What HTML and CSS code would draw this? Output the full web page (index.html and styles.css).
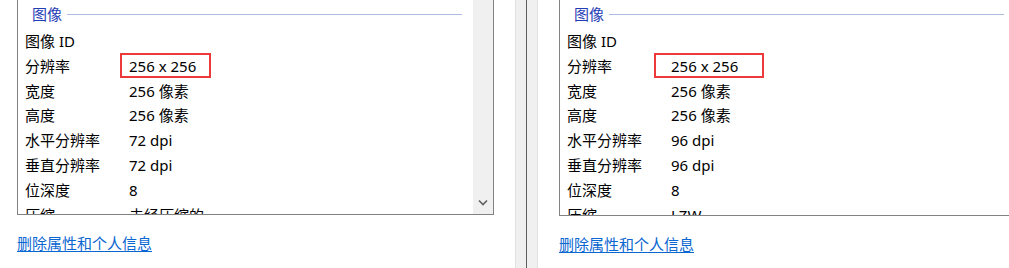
FILE: index.html
```html
<!DOCTYPE html>
<html lang="zh-CN">
<head>
    <meta charset="UTF-8">
    <title>图像属性对比</title>
    <link rel="stylesheet" href="styles.css">
</head>
<body>
    <!-- Left properties pane -->
    <div class="pane pane-left">
        <div class="details details-left">
            <div class="details-list">
                <div class="group-head">
                    <span class="group-title">图像</span>
                    <span class="group-rule"></span>
                </div>
                <div class="row"><span class="label">图像 ID</span><span class="value"></span></div>
                <div class="row"><span class="label">分辨率</span><span class="value">256 x 256</span></div>
                <div class="row"><span class="label">宽度</span><span class="value">256 像素</span></div>
                <div class="row"><span class="label">高度</span><span class="value">256 像素</span></div>
                <div class="row"><span class="label">水平分辨率</span><span class="value">72 dpi</span></div>
                <div class="row"><span class="label">垂直分辨率</span><span class="value">72 dpi</span></div>
                <div class="row"><span class="label">位深度</span><span class="value">8</span></div>
                <div class="row"><span class="label">压缩</span><span class="value">未经压缩的</span></div>
                <!-- Annotation box -->
                <div class="mark mark-left"></div>
            </div>
            <div class="scrollbar">
                <svg class="chevron" width="10" height="7" viewBox="0 0 10 7">
                    <path d="M1 1.5 L5 5.5 L9 1.5" fill="none" stroke="#606060" stroke-width="1.6"/>
                </svg>
            </div>
        </div>
        <a class="remove-link" href="#">删除属性和个人信息</a>
    </div>

    <!-- Splitter between the two dialogs -->
    <div class="splitter"><span class="splitter-line"></span></div>

    <!-- Right properties pane -->
    <div class="pane pane-right">
        <div class="details details-right">
            <div class="details-list">
                <div class="group-head">
                    <span class="group-title">图像</span>
                    <span class="group-rule"></span>
                </div>
                <div class="row"><span class="label">图像 ID</span><span class="value"></span></div>
                <div class="row"><span class="label">分辨率</span><span class="value">256 x 256</span></div>
                <div class="row"><span class="label">宽度</span><span class="value">256 像素</span></div>
                <div class="row"><span class="label">高度</span><span class="value">256 像素</span></div>
                <div class="row"><span class="label">水平分辨率</span><span class="value">96 dpi</span></div>
                <div class="row"><span class="label">垂直分辨率</span><span class="value">96 dpi</span></div>
                <div class="row"><span class="label">位深度</span><span class="value">8</span></div>
                <div class="row"><span class="label">压缩</span><span class="value">LZW</span></div>
                <div class="mark mark-right"></div>
            </div>
            <div class="scrollbar"></div>
        </div>
        <a class="remove-link" href="#">删除属性和个人信息</a>
    </div>
</body>
</html>
```

FILE: styles.css
```css
/* Reset */
* {
    margin: 0;
    padding: 0;
    box-sizing: border-box;
}

body {
    display: flex;
    width: 1009px;
    height: 268px;
    overflow: hidden;
    background-color: #ffffff;
    font-family: "Noto Sans", "Noto Sans CJK SC", sans-serif;
    font-size: 15px;
    color: #000000;
}

/* Panes */
.pane {
    flex: none;
    display: flex;
    flex-direction: column;
}

.pane-left {
    width: 515px;
    padding-left: 17px;
}

.pane-right {
    width: 497px;
    padding-left: 21px;
}

/* Details list box (top is scrolled out of view) */
.details {
    display: flex;
    width: 477px;
    border: 1px solid #828282;
    border-top: none;
    overflow: hidden;
}

.details-left {
    height: 215px;
}

.details-right {
    height: 216px;
}

.details-list {
    position: relative;
    flex: 1;
    padding: 0 11px 0 7px;
    overflow: hidden;
}

/* Group header */
.group-head {
    display: flex;
    align-items: center;
    height: 29px;
    padding-left: 7px;
    padding-bottom: 1px;
}

.group-title {
    color: #1f3db5;
    line-height: 20px;
}

.group-rule {
    flex: 1;
    height: 1px;
    margin-left: 5px;
    background-color: #aebbe3;
}

/* Property rows */
.row {
    display: flex;
    height: 24.8px;
    line-height: 24.8px;
    white-space: nowrap;
}

.label {
    width: 104px;
    flex: none;
}

/* Red annotation boxes */
.mark {
    position: absolute;
    top: 53px;
    height: 25px;
    border: 2px solid #ec3a3a;
}

.mark-left {
    left: 102px;
    width: 91px;
}

.mark-right {
    left: 94px;
    width: 110px;
}

/* Vertical scrollbar */
.scrollbar {
    position: relative;
    width: 20px;
    flex: none;
    background-color: #f0f0f0;
}

.chevron {
    position: absolute;
    left: 5px;
    bottom: 8px;
}

/* Link below the list */
.remove-link {
    align-self: flex-start;
    margin-top: 18px;
    color: #0a66d0;
    line-height: 20px;
    text-decoration: underline;
    text-underline-offset: 2px;
}

/* Splitter */
.splitter {
    flex: none;
    display: flex;
    justify-content: center;
    width: 23px;
    height: 268px;
    background-color: #f0f0f0;
    border-left: 1px solid #e2e2e2;
    border-right: 1px solid #e2e2e2;
}

.splitter-line {
    width: 1px;
    background-color: #5e5e5e;
}
```
